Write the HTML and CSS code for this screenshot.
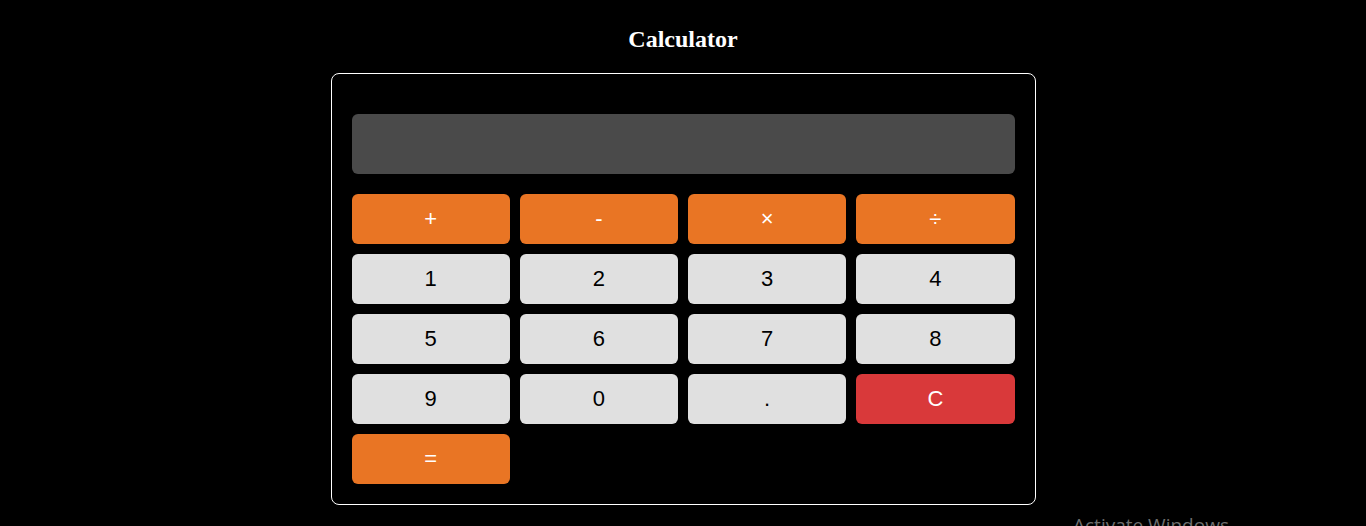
FILE: index.html
```html
<!DOCTYPE html>
<html lang="en">
<head>
<meta charset="utf-8">
<title>Calculator</title>
<link rel="stylesheet" href="styles.css">
</head>
<body>
  <main class="page">
    <h2 class="title">Calculator</h2>
    <div class="calculator">
      <div class="display"></div>
      <div class="keys">
        <button class="key op">+</button>
        <button class="key op">-</button>
        <button class="key op">×</button>
        <button class="key op">÷</button>
        <button class="key num">1</button>
        <button class="key num">2</button>
        <button class="key num">3</button>
        <button class="key num">4</button>
        <button class="key num">5</button>
        <button class="key num">6</button>
        <button class="key num">7</button>
        <button class="key num">8</button>
        <button class="key num">9</button>
        <button class="key num">0</button>
        <button class="key num">.</button>
        <button class="key clear">C</button>
        <button class="key op">=</button>
      </div>
    </div>
  </main>
  <div class="watermark">Activate Windows</div>
</body>
</html>
```
FILE: styles.css
```css
html, body {
  margin: 0;
  padding: 0;
  background: #000;
  height: 100%;
  overflow: hidden;
}

.page {
  display: flex;
  flex-direction: column;
  align-items: center;
}

.title {
  font-family: "Liberation Serif", "Times New Roman", serif;
  font-weight: bold;
  font-size: 24px;
  color: #fff;
  margin: 26px 0 20px;
}

.calculator {
  width: 663px;
  padding: 20px;
  border: 1px solid #fff;
  border-radius: 8px;
}

.display {
  height: 60px;
  background: #4a4a4a;
  border-radius: 6px;
  margin: 20px 0;
}

.keys {
  display: grid;
  grid-template-columns: repeat(4, 1fr);
  gap: 10px;
}

.key {
  height: 50px;
  border: none;
  border-radius: 6px;
  font-family: "Liberation Sans", Arial, sans-serif;
  font-size: 22px;
  padding: 0;
  display: flex;
  align-items: center;
  justify-content: center;
}

.op {
  background: #e97524;
  color: #fff;
}

.num {
  background: #e0e0e0;
  color: #000;
}

.clear {
  background: #d9393a;
  color: #fff;
}

.watermark {
  position: absolute;
  left: 1073px;
  top: 512px;
  font-family: "Open Sans", "Noto Sans", sans-serif;
  font-size: 19px;
  color: #6e6e6e;
  white-space: nowrap;
}
```
